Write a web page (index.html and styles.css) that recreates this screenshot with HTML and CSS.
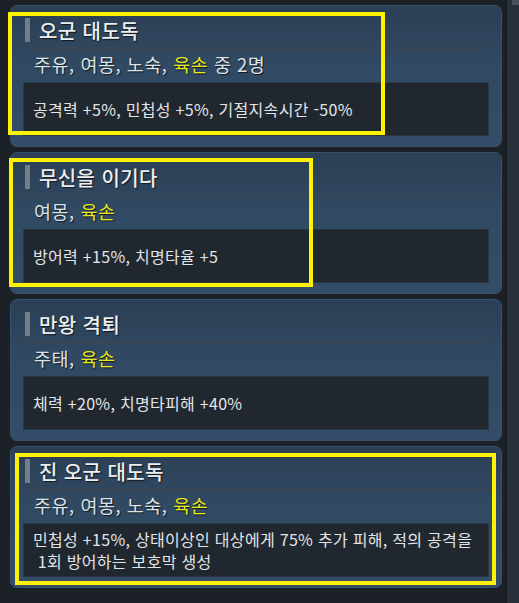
FILE: index.html
```html
<!DOCTYPE html>
<html lang="ko">
<head>
  <meta charset="UTF-8">
  <title>인연 효과</title>
  <link rel="stylesheet" href="styles.css">
</head>
<body>
  <div class="panel">
    <!-- Synergy list -->
    <div class="synergy-list">
      <div class="synergy">
        <div class="synergy-title">오군 대도독</div>
        <div class="synergy-divider"></div>
        <div class="synergy-members">주유, 여몽, 노숙, <span class="hl">육손</span> 중 2명</div>
        <div class="synergy-effect"><p>공격력 +5%, 민첩성 +5%, 기절지속시간 -50%</p></div>
        <div class="mark mark-1"></div>
      </div>

      <div class="synergy">
        <div class="synergy-title">무신을 이기다</div>
        <div class="synergy-divider"></div>
        <div class="synergy-members">여몽, <span class="hl">육손</span></div>
        <div class="synergy-effect"><p>방어력 +15%, 치명타율 +5</p></div>
        <div class="mark mark-2"></div>
      </div>

      <div class="synergy">
        <div class="synergy-title">만왕 격퇴</div>
        <div class="synergy-divider"></div>
        <div class="synergy-members">주태, <span class="hl">육손</span></div>
        <div class="synergy-effect"><p>체력 +20%, 치명타피해 +40%</p></div>
      </div>

      <div class="synergy">
        <div class="synergy-title">진 오군 대도독</div>
        <div class="synergy-divider"></div>
        <div class="synergy-members">주유, 여몽, 노숙, <span class="hl">육손</span></div>
        <div class="synergy-effect"><p>민첩성 +15%, 상태이상인 대상에게 75% 추가 피해, 적의 공격을<br>&nbsp;1회 방어하는 보호막 생성</p></div>
        <div class="mark mark-4"></div>
      </div>
    </div>

    <!-- Scroll track -->
    <div class="scroll-track">
      <div class="scroll-thumb"></div>
    </div>
  </div>
</body>
</html>
```

FILE: styles.css
```css
body {
  margin: 0;
  background: #1c2127;
  font-family: "Noto Sans CJK KR", "Noto Sans", sans-serif;
  color: #e4e7ea;
}

.panel {
  display: flex;
  height: 603px;
  overflow: hidden;
}

/* List of synergy cards */
.synergy-list {
  width: 494px;
  padding: 5px 3px 0 10px;
  display: flex;
  flex-direction: column;
  gap: 5px;
}

.synergy {
  position: relative;
  padding: 12px 12px 10px 12px;
  border: 1px solid #38516b;
  border-radius: 7px;
  background: linear-gradient(to bottom, #2b3f55, #314a63 45%, #334d68);
}

.synergy-title {
  display: flex;
  align-items: center;
  height: 24px;
  padding-left: 2px;
  font-size: 20px;
  font-weight: 500;
  letter-spacing: 0.4px;
  color: #eceef0;
  text-shadow: 1px 1px 1px #111820;
}

.synergy-title::before {
  content: "";
  width: 5px;
  height: 24px;
  margin-right: 9px;
  background: #737e89;
}

.synergy-divider {
  margin-top: 5px;
  height: 2px;
  background: #3a4653;
}

.synergy-members {
  height: 33px;
  line-height: 31px;
  padding-left: 11px;
  font-size: 18.5px;
  letter-spacing: 0.5px;
  color: #dde2e6;
  text-shadow: 1px 1px 1px #111820;
  white-space: nowrap;
}

.synergy-members .hl {
  color: #e9e81a;
}

.synergy-effect {
  display: flex;
  align-items: center;
  height: 54px;
  box-sizing: border-box;
  padding: 0 9px;
  background: #21272f;
  border: 1px solid #2b3745;
}

.synergy-effect p {
  margin: 0;
  font-size: 16px;
  line-height: 22px;
  letter-spacing: 0.3px;
  color: #e2e5e8;
  white-space: nowrap;
}

/* Yellow highlight frames */
.mark {
  position: absolute;
  border: 4px solid #fff200;
  box-sizing: border-box;
}

.mark-1 {
  left: -3px;
  top: 6px;
  width: 377px;
  height: 123px;
}

.mark-2 {
  left: -2px;
  top: 5px;
  width: 304px;
  height: 129px;
}

.mark-4 {
  left: 4px;
  top: 6px;
  width: 481px;
  height: 132px;
}

/* Scroll track on the right */
.scroll-track {
  width: 12px;
  background: #29313b;
  border-left: 2px solid #1a1e23;
}

.scroll-thumb {
  height: 5px;
  margin-left: 5px;
  background: #48525e;
}
```
